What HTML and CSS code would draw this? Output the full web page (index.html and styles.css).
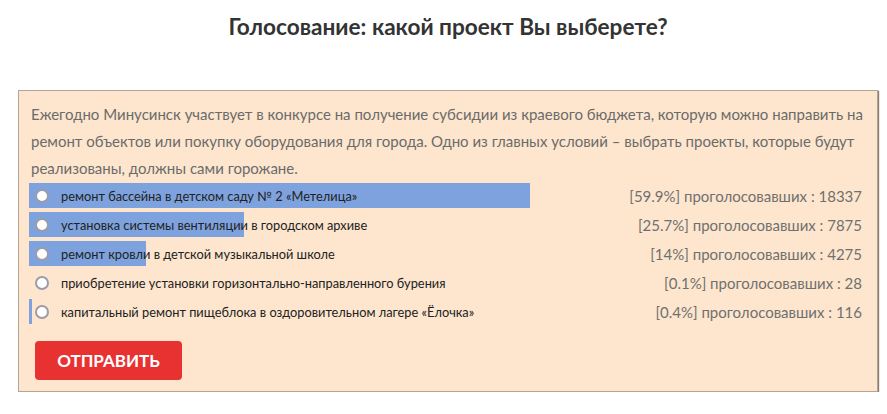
FILE: index.html
```html
<!DOCTYPE html>
<html lang="ru">
<head>
    <meta charset="UTF-8">
    <meta name="viewport" content="width=device-width, initial-scale=1.0">
    <title>Голосование</title>
    <link rel="stylesheet" href="styles.css">
</head>
<body>
    <h1 class="title">Голосование: какой проект Вы выберете?</h1>

    <form class="poll">
        <p class="intro">Ежегодно Минусинск участвует в конкурсе на получение субсидии из краевого бюджета, которую можно направить на ремонт объектов или покупку оборудования для города. Одно из главных условий – выбрать проекты, которые будут реализованы, должны сами горожане.</p>

        <div class="options">
            <label class="option" style="--pct: 59.9%">
                <input type="radio" name="vote" value="1">
                <span class="dot"></span>
                <span class="name">ремонт бассейна в детском саду № 2 «Метелица»</span>
                <span class="stat">[59.9%] проголосовавших : 18337</span>
            </label>
            <label class="option" style="--pct: 25.7%">
                <input type="radio" name="vote" value="2">
                <span class="dot"></span>
                <span class="name">установка системы вентиляции в городском архиве</span>
                <span class="stat">[25.7%] проголосовавших : 7875</span>
            </label>
            <label class="option" style="--pct: 14%">
                <input type="radio" name="vote" value="3">
                <span class="dot"></span>
                <span class="name">ремонт кровли в детской музыкальной школе</span>
                <span class="stat">[14%] проголосовавших : 4275</span>
            </label>
            <label class="option" style="--pct: 0%">
                <input type="radio" name="vote" value="4">
                <span class="dot"></span>
                <span class="name">приобретение установки горизонтально-направленного бурения</span>
                <span class="stat">[0.1%] проголосовавших : 28</span>
            </label>
            <label class="option" style="--pct: 0.4%">
                <input type="radio" name="vote" value="5">
                <span class="dot"></span>
                <span class="name">капитальный ремонт пищеблока в оздоровительном лагере «Ёлочка»</span>
                <span class="stat">[0.4%] проголосовавших : 116</span>
            </label>
        </div>

        <button type="submit" class="send-btn">Отправить</button>
    </form>
</body>
</html>
```

FILE: styles.css
```css
/* Poll page */
body {
    margin: 0;
    background-color: #ffffff;
    font-family: "Lato", "Liberation Sans", sans-serif;
    color: #333333;
}

.title {
    margin: 0;
    padding-top: 12px;
    padding-left: 9px;
    text-align: center;
    font-size: 22.6px;
    font-weight: 700;
    color: #333333;
    line-height: 30px;
}

.poll {
    margin: 48px 0 0 18px;
    width: 860px;
    box-sizing: border-box;
    padding: 10px 12px 10px 10px;
    background-color: #fde6cd;
    border: 1px solid #b3a596;
    box-shadow: 1px 1px 1px #8c7c6c;
}

.intro {
    margin: 0 0 1px 2px;
    font-size: 15px;
    line-height: 27px;
    color: #6b6b6b;
}

.options {
    display: flex;
    flex-direction: column;
    gap: 4px;
}

.option {
    display: flex;
    align-items: center;
    height: 25px;
    padding-right: 3px;
    background: linear-gradient(to right, #7ea2dd var(--pct), transparent var(--pct));
    cursor: pointer;
}

.option input {
    display: none;
}

.dot {
    width: 10px;
    height: 10px;
    margin-left: 6px;
    border: 2px solid #9c9ca8;
    border-radius: 50%;
    background-color: #ffffff;
}

.name {
    margin-left: 12px;
    font-size: 12.8px;
    color: #222222;
}

.stat {
    margin-left: auto;
    font-size: 15px;
    color: #707070;
}

.send-btn {
    margin: 17px 0 1px 6px;
    width: 147px;
    height: 39px;
    background-color: #e83232;
    color: #ffffff;
    border: none;
    border-radius: 4px;
    font-family: inherit;
    font-size: 17px;
    font-weight: 700;
    text-transform: uppercase;
    cursor: pointer;
}
```
